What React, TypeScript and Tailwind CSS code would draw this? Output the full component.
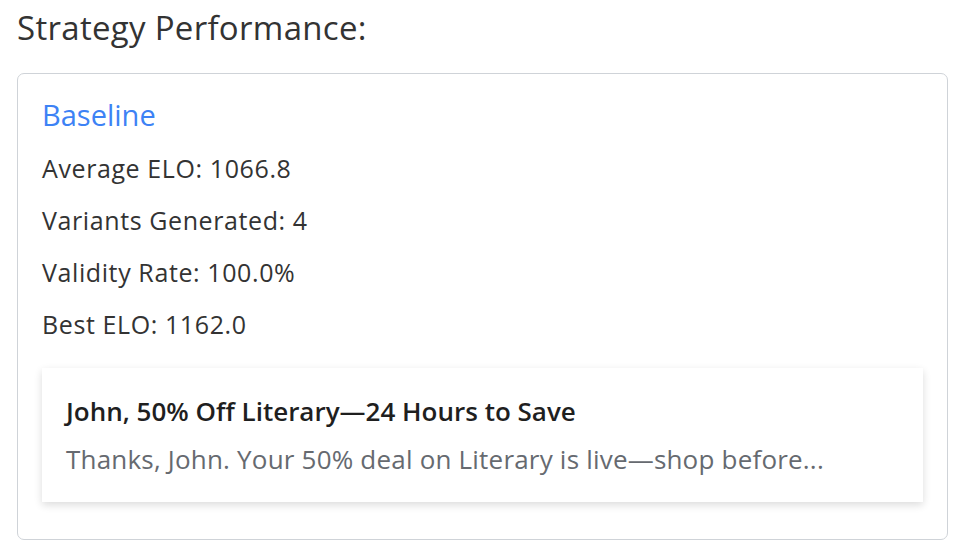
export default function App() {
  const stats = [
    "Average ELO: 1066.8",
    "Variants Generated: 4",
    "Validity Rate: 100.0%",
    "Best ELO: 1162.0",
  ];

  return (
    <div
      className="min-h-screen bg-white px-[17px] pt-[8px] text-[#333333]"
      style={{ fontFamily: "'Open Sans', 'Noto Sans', sans-serif" }}
    >
      <h2 className="text-[33px] leading-[40px] font-normal tracking-[0.3px]">Strategy Performance:</h2>

      <div className="mt-[25px] w-[931px] rounded-[7px] border border-[#cfd3d8] px-6 pt-[23px] pb-[37px]">
        <h3 className="text-[29px] leading-[36px] text-[#3d82f5]">Baseline</h3>
        <div className="mt-[9px] flex flex-col">
          {stats.map((s) => (
            <p key={s} className="text-[25px] leading-[52px] tracking-[0.6px]">
              {s}
            </p>
          ))}
        </div>

        <div className="mt-[18px] bg-white px-6 pt-[26px] pb-[26px] shadow-[0_3px_8px_rgba(0,0,0,0.14)]">
          <p className="text-[26px] leading-[34px] font-semibold text-[#1f1f1f]">
            John, 50% Off Literary—24 Hours to Save
          </p>
          <p className="mt-[14px] text-[26px] leading-[34px] tracking-[0.2px] text-[#666a70]">
            Thanks, John. Your 50% deal on Literary is live—shop before...
          </p>
        </div>
      </div>
    </div>
  );
}
